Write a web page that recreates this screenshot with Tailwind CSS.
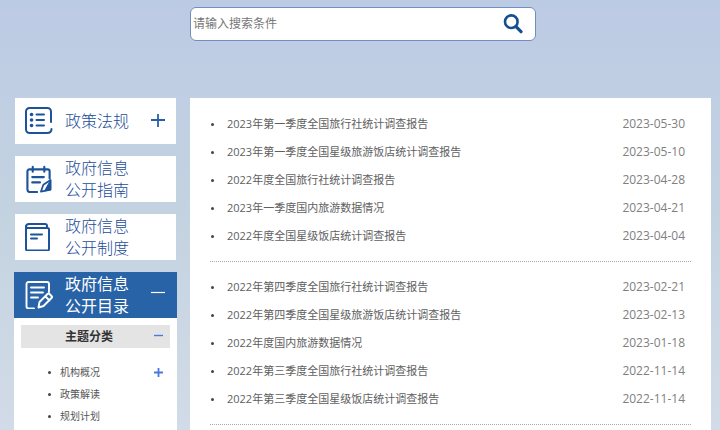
<!DOCTYPE html>
<html lang="zh-CN">
<head>
  <meta charset="UTF-8" />
  <meta name="viewport" content="width=device-width, initial-scale=1.0" />
  <title>政府信息公开目录</title>
  <script src="https://cdn.jsdelivr.net/npm/@tailwindcss/browser@4"></script>
</head>
<body class="min-h-screen bg-linear-to-b from-[#bccbe4] via-[#c4d3e0] to-[#d3dce8] font-['Open_Sans','Noto_Sans_CJK_SC',sans-serif] text-[#606060]">

  <!-- Search -->
  <header class="pt-[7px] pb-[57px] pl-[190px] pr-[184px]">
    <form class="flex h-[34px] items-center rounded-md border border-[#6f8fc0] bg-white pl-[2px] pr-3">
      <input type="search" aria-label="搜索" placeholder="请输入搜索条件" class="min-w-0 flex-1 text-xs outline-none placeholder:text-[#777]">
      <button type="submit" aria-label="搜索">
        <svg class="size-5" viewBox="0 0 20 20" fill="none" stroke="#14508f" stroke-linecap="round">
          <circle cx="8.3" cy="7.7" r="6.3" stroke-width="2.6" />
          <path d="M13 12.7l5 5" stroke-width="3.2" />
        </svg>
      </button>
    </form>
  </header>

  <div class="flex items-stretch pl-[14px] pr-[9px]">

    <!-- Sidebar -->
    <nav class="mr-[13px] flex w-[163px] shrink-0 flex-col text-[#1c4c97]">
      <div class="flex flex-col gap-3 px-px pb-3 font-light">
        <button class="flex h-[46px] items-center bg-white pl-[10px] pr-[11px] text-left">
          <svg class="mr-3 size-7" viewBox="0 0 28 28" fill="none" stroke="#1d5499" stroke-width="2" stroke-linecap="round">
            <path d="M26 15V4.500a3.500 3.500 0 0 0-3.500-3.500h-18A3.500 3.500 0 0 0 1 4.500v18A3.500 3.500 0 0 0 4.500 26H22c3 0 4.500-1 4.500-4" />
            <path d="M11.500 7.500H19M11.500 13H19M11.500 18.500H19" />
            <path d="M6.500 7.500h.1M6.500 13h.1M6.500 18.500h.1" stroke-width="3.600" />
          </svg>
          <span class="flex-1 text-base leading-[22px]">政策法规</span>
          <svg class="size-[14px]" viewBox="0 0 14 14" stroke="#2a5fa8" stroke-width="1.8"><path d="M0 6h14M7 -1v14" /></svg>
        </button>
        <a href="#" class="flex h-[46px] items-center bg-white pl-[10px] pr-[11px]">
          <svg class="mr-3 size-7" viewBox="0 0 28 29" fill="none" stroke="#1d5499" stroke-width="2.2" stroke-linecap="round" stroke-linejoin="round">
            <path d="M12 28H4.500A2.500 2.500 0 0 1 2 25.500V6.500A2 2 0 0 1 4 4.500h19a2 2 0 0 1 2 2V14" />
            <path d="M7.500 2v5M19.500 2v5M7 12.500h12M7 18h8" />
            <path d="M16 27.500l2.500-7 7.500-5v10z" stroke-width="1.8" />
            <path d="M20 26.500l6-11v10z" fill="#1d5499" stroke-width="1" />
          </svg>
          <span class="text-base leading-[22px]">政府信息<br>公开指南</span>
        </a>
        <a href="#" class="flex h-[46px] items-center bg-white pl-[10px] pr-[11px]">
          <svg class="mr-3 size-7" viewBox="0 0 28 28" fill="none" stroke="#1d5499" stroke-width="2" stroke-linecap="round" stroke-linejoin="round">
            <path d="M1 3.500V26a1.500 1.500 0 0 0 1.500 1.500h20A1.500 1.500 0 0 0 24 26V6.500A1.500 1.500 0 0 0 22.500 5H2" />
            <path d="M1 4a3 3 0 0 1 3-3h16a2 2 0 0 1 2 2v2M6 11.500h11M6 15.500h6" />
          </svg>
          <span class="text-base leading-[22px]">政府信息<br>公开制度</span>
        </a>
      </div>

      <button class="flex h-[46px] items-center bg-[#2862a7] pl-[11px] pr-3 text-left text-white">
        <svg class="mr-3 size-7" viewBox="0 0 28 28" fill="none" stroke="currentColor" stroke-width="1.9" stroke-linecap="round" stroke-linejoin="round">
          <path d="M9 27.500H3.500A2 2 0 0 1 1.500 25.500V3A2 2 0 0 1 3.500 1H22a2 2 0 0 1 2 2v8M6 6.500H19M6 11.500H18M6 16.500h7" />
          <path d="M13.500 26.500l1-5.500 8-8q1-1 2 0l2 2q1 1 0 2l-8 8zM20.500 15.500l4 4" />
        </svg>
        <span class="flex-1 text-base leading-[22px]">政府信息<br>公开目录</span>
        <svg class="size-[14px]" viewBox="0 0 14 14" stroke="currentColor" stroke-width="1.2"><path d="M0 4.500h14" /></svg>
      </button>
      <div class="flex-1 bg-white px-[7px] pt-[7px]">
        <button class="flex h-[23px] w-full items-center bg-[#e4e4e4] pl-11 pr-[7px] text-xs font-bold text-[#333]">
          <span class="flex-1 text-left">主题分类</span>
          <svg class="size-[9px]" viewBox="0 0 9 9" stroke="#4a78e0" stroke-width="1.400"><path d="M0 3.500h9" /></svg>
        </button>
        <ul class="pt-[13px] pl-[27px] pr-[7px] text-[10px] leading-[22px] text-[#555]">
          <li class="flex items-center">
            <i class="mr-[9px] size-[3px] rounded-full bg-[#444]"></i>
            <a href="#" class="flex-1">机构概况</a>
            <button aria-label="展开"><svg class="size-[9px]" viewBox="0 0 9 9" stroke="#4a78e0" stroke-width="1.800"><path d="M0 4.500h9M4.500 0v9" /></svg></button>
          </li>
          <li class="flex items-center">
            <i class="mr-[9px] size-[3px] rounded-full bg-[#444]"></i>
            <a href="#">政策解读</a>
          </li>
          <li class="flex items-center">
            <i class="mr-[9px] size-[3px] rounded-full bg-[#444]"></i>
            <a href="#">规划计划</a>
          </li>
        </ul>
      </div>
    </nav>

    <!-- Article list -->
    <main class="flex-1 bg-white px-5 pt-px pb-5 text-[11px] leading-7">
      <ul class="border-b border-dotted border-[#aaa] py-[11px]">
        <li class="flex items-center pr-[6px]"><i class="mr-[13px] ml-px size-[3px] rounded-full bg-[#444]"></i><a href="#" class="flex-1">2023年第一季度全国旅行社统计调查报告</a><time class="text-xs leading-7 text-[#808080]">2023-05-30</time></li>
        <li class="flex items-center pr-[6px]"><i class="mr-[13px] ml-px size-[3px] rounded-full bg-[#444]"></i><a href="#" class="flex-1">2023年第一季度全国星级旅游饭店统计调查报告</a><time class="text-xs leading-7 text-[#808080]">2023-05-10</time></li>
        <li class="flex items-center pr-[6px]"><i class="mr-[13px] ml-px size-[3px] rounded-full bg-[#444]"></i><a href="#" class="flex-1">2022年度全国旅行社统计调查报告</a><time class="text-xs leading-7 text-[#808080]">2023-04-28</time></li>
        <li class="flex items-center pr-[6px]"><i class="mr-[13px] ml-px size-[3px] rounded-full bg-[#444]"></i><a href="#" class="flex-1">2023年一季度国内旅游数据情况</a><time class="text-xs leading-7 text-[#808080]">2023-04-21</time></li>
        <li class="flex items-center pr-[6px]"><i class="mr-[13px] ml-px size-[3px] rounded-full bg-[#444]"></i><a href="#" class="flex-1">2022年度全国星级饭店统计调查报告</a><time class="text-xs leading-7 text-[#808080]">2023-04-04</time></li>
      </ul>
      <ul class="border-b border-dotted border-[#aaa] py-[11px]">
        <li class="flex items-center pr-[6px]"><i class="mr-[13px] ml-px size-[3px] rounded-full bg-[#444]"></i><a href="#" class="flex-1">2022年第四季度全国旅行社统计调查报告</a><time class="text-xs leading-7 text-[#808080]">2023-02-21</time></li>
        <li class="flex items-center pr-[6px]"><i class="mr-[13px] ml-px size-[3px] rounded-full bg-[#444]"></i><a href="#" class="flex-1">2022年第四季度全国星级旅游饭店统计调查报告</a><time class="text-xs leading-7 text-[#808080]">2023-02-13</time></li>
        <li class="flex items-center pr-[6px]"><i class="mr-[13px] ml-px size-[3px] rounded-full bg-[#444]"></i><a href="#" class="flex-1">2022年度国内旅游数据情况</a><time class="text-xs leading-7 text-[#808080]">2023-01-18</time></li>
        <li class="flex items-center pr-[6px]"><i class="mr-[13px] ml-px size-[3px] rounded-full bg-[#444]"></i><a href="#" class="flex-1">2022年第三季度全国旅行社统计调查报告</a><time class="text-xs leading-7 text-[#808080]">2022-11-14</time></li>
        <li class="flex items-center pr-[6px]"><i class="mr-[13px] ml-px size-[3px] rounded-full bg-[#444]"></i><a href="#" class="flex-1">2022年第三季度全国星级饭店统计调查报告</a><time class="text-xs leading-7 text-[#808080]">2022-11-14</time></li>
      </ul>
    </main>
  </div>

</body>
</html>
